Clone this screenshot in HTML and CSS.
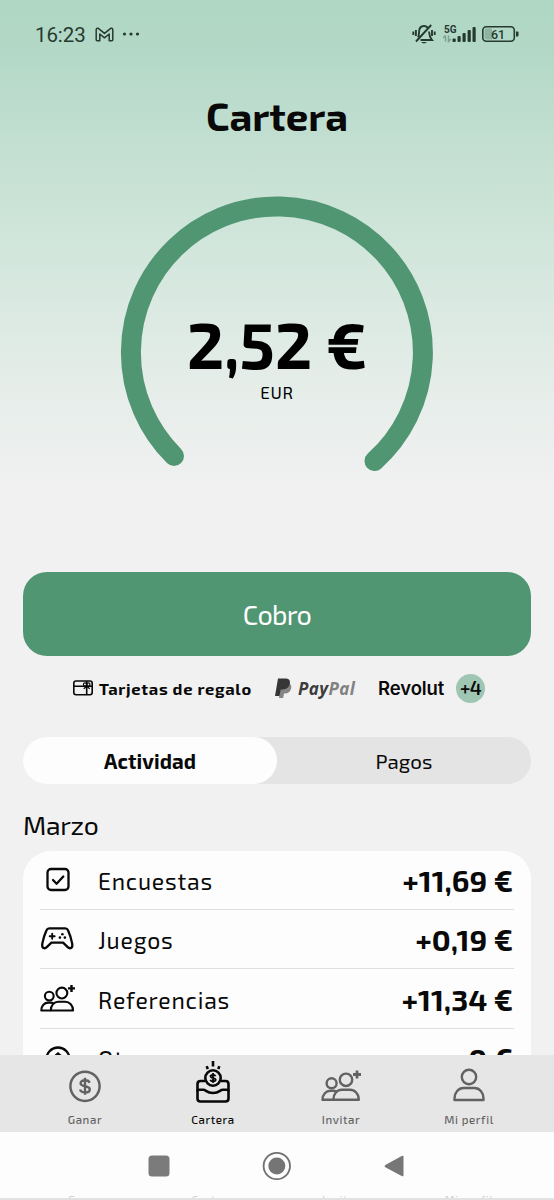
FILE: index.html
```html
<!DOCTYPE html>
<html lang="es">
<head>
<meta charset="utf-8">
<title>Cartera</title>
<link rel="stylesheet" href="styles.css">
</head>
<body>
<svg width="0" height="0" class="defs">
  <symbol id="people" viewBox="0 0 40 32">
    <g fill="none" stroke="currentColor" stroke-width="2.400" stroke-linejoin="round">
      <circle cx="10.600" cy="13.800" r="5"/>
      <circle cx="25" cy="10.300" r="6.200"/>
      <path d="M12.300 30.300c0-6 4-10 8.500-10h8c5 0 9 4 9 10z"/>
      <path d="M15.500 22.100c-1.200-.6-2-.8-3.500-.8H9.500c-4.500 0-8 3.500-8 9h11"/>
    </g>
    <path d="M36 1v8M32 5h8" stroke="currentColor" stroke-width="2.800" fill="none"/>
  </symbol>
</svg>
<div class="phone">
  <main class="content">
    <div class="status">
      <span class="clock">16:23</span>
      <svg class="gmail" width="19" height="15" viewBox="0 0 19 15" fill="none" stroke="currentColor" stroke-width="1.500" stroke-linejoin="round"><path d="M1.200 2.600Q1.500.8 3.300 1.300L9.500 6.400 15.700 1.300Q17.500.8 17.800 2.600V12.800q0 1-1 1h-2.600V7L9.500 10.800 4.800 7v6.800H2.200q-1 0-1-1z"/></svg>
      <svg class="dots" width="18" height="4" viewBox="0 0 18 4" fill="currentColor"><circle cx="2.500" cy="2" r="1.600"/><circle cx="9" cy="2" r="1.600"/><circle cx="15.500" cy="2" r="1.600"/></svg>
      <svg class="bell" width="24" height="20" viewBox="0 0 24 20" fill="none" stroke="currentColor" stroke-width="1.900"><path d="M6 13.500c1-1.500 1-3 1-5 0-4 2-6.500 5-6.500 1.500 0 2.700.6 3.500 1.500M17 7.500c.2 4 .5 5.500 3 8.500H8.500M19.200 1 4 17.500M1.300 7.500v3.500M3.900 6v6M20 6v6M22.700 7.500v3.500"/><path d="M9 18h6q-3 2.800-6 0z" fill="currentColor" stroke="none"/></svg>
      <svg class="signal" width="33" height="20" viewBox="0 -2 33 20"><text x="1" y="7.500" class="net">5G</text><path class="faint" d="M2.500 10.500v6M0 13l2.500-2.500M5.500 10.500v6L8 14"/><g fill="currentColor"><rect x="9.500" y="13.500" width="3.300" height="3.500" rx="1"/><rect x="14.500" y="11" width="3.200" height="6" rx="1"/><rect x="19.500" y="8" width="3.200" height="9" rx="1"/><rect x="24.600" y="5" width="3.200" height="12" rx="1"/><rect x="29.500" y="2" width="3.200" height="15" rx="1"/></g></svg>
      <svg class="battery" width="37" height="16" viewBox="0 0 37 16"><path d="M4.500 2.500H10v11H4.500q-2 0-2-2v-7q0-2 2-2z" fill="#8fb3a1"/><rect x=".8" y=".8" width="31.500" height="14.400" rx="3.500" fill="none" stroke="currentColor" stroke-width="1.600"/><path d="M34 5.500h1.500q1 0 1 1v3q0 1-1 1H34z" fill="currentColor"/><text x="16" y="12.500" text-anchor="middle" class="level">61</text></svg>
    </div>
    <h1 class="title">Cartera</h1>
    <div class="gauge">
      <svg class="arc" width="314" height="314" viewBox="120 196 314 314"><path d="M174 456A146 146 0 1 1 374.500 461" fill="none" stroke="#519672" stroke-width="20" stroke-linecap="round"/></svg>
      <div class="balance"><div class="amount">2,52 €</div><div class="currency">EUR</div></div>
    </div>
    <button class="cashout">Cobro</button>
    <div class="methods">
      <svg class="gift" width="20" height="16" viewBox="0 0 20 16" fill="none" stroke="currentColor" stroke-width="1.600"><rect x=".8" y="1" width="18.400" height="13.800" rx="2.200"/><path d="M1 6.200h18M13.700 1v14"/><path d="m13.700 6.200-3 2.600M13.700 6.200l3 2.600" stroke-width="1.200"/><circle cx="12" cy="4.500" r="1.600" stroke-width="1.200"/><circle cx="15.400" cy="4.500" r="1.600" stroke-width="1.200"/></svg>
      <span class="cards">Tarjetas de regalo</span>
      <svg class="pp" width="17" height="21" viewBox="0 0 17 21"><path d="M6 5h7.500c2.500 1 3.300 3 2.600 5.500-.8 3.500-3 5-6.300 5H9L8.200 20H4z" fill="#858585"/><path d="M3 .5h7.500c3.700 0 5 2.200 4.300 5.300-.8 3.800-3.300 5.700-7 5.700H5.700L4.500 18H0z" fill="#363636"/></svg>
      <span class="paypal">Pay<span class="pal">Pal</span></span>
      <span class="revolut">Revolut</span>
      <span class="more">+4</span>
    </div>
    <div class="tabs"><div class="tab active">Actividad</div><div class="tab">Pagos</div></div>
    <h2 class="month">Marzo</h2>
    <section class="card">
      <div class="row">
        <svg width="36" height="36" viewBox="0 0 36 36" fill="none" stroke="currentColor" stroke-width="2.300" stroke-linecap="round" stroke-linejoin="round"><rect x="7.500" y="7" width="21" height="21" rx="3.500"/><path d="m13 18 3.600 3.700 6.700-7.200"/></svg>
        <span class="name">Encuestas</span><span class="value">+11,69 €</span>
      </div>
      <div class="row">
        <svg width="36" height="36" viewBox="0 0 36 36" fill="none" stroke="currentColor" stroke-width="2.300" stroke-linecap="round" stroke-linejoin="round"><path d="M9.300 7.300H25.200q2 0 2.800 1.900 2.900 6.300 4.200 13.400c.8 4.800-2.300 5.600-4.500 3.500l-4.600-4.400H11.400l-4.600 4.400C4.600 28.200 1.500 27.400 2.300 22.600Q3.600 15.500 6.500 9.200 7.300 7.300 9.300 7.300z"/><path d="M12.200 12.700v5M9.700 15.200h5" stroke-width="1.900"/><g fill="currentColor" stroke="none"><circle cx="22.400" cy="13.200" r="1.300"/><circle cx="19.900" cy="16.600" r="1.300"/><circle cx="24.900" cy="16.600" r="1.300"/></g></svg>
        <span class="name">Juegos</span><span class="value">+0,19 €</span>
      </div>
      <div class="row">
        <svg width="36" height="36" viewBox="0 0 36 36"><use href="#people" x="0" y="3" width="35" height="28"/></svg>
        <span class="name">Referencias</span><span class="value">+11,34 €</span>
      </div>
      <div class="row">
        <svg width="36" height="36" viewBox="0 0 36 36" fill="none" stroke="currentColor" stroke-width="2.300" stroke-linecap="round"><circle cx="18" cy="19" r="11.500"/><path d="M18 13.500V25M14.500 16.500l3.500-3 3.500 3"/></svg>
        <span class="name">Otros</span><span class="value">0 €</span>
      </div>
    </section>
  </main>
  <nav class="menu">
    <div class="item">
      <svg width="40" height="48" viewBox="0 0 40 48" fill="none" stroke="currentColor" stroke-width="2.500"><circle cx="20" cy="26.300" r="14.600"/><path d="M24.600 22.800c-.5-1.700-2-2.600-4.500-2.600-2.700 0-4.500 1-4.500 3 0 4.300 9.200 1.800 9.200 6.200 0 2-1.900 3-4.700 3-2.700 0-4.500-1-5-2.900M20 17.800v17" stroke-width="2.400"/></svg>
      <span>Ganar</span>
    </div>
    <div class="item on">
      <svg width="40" height="48" viewBox="0 0 40 48" fill="none" stroke="currentColor" stroke-width="2.600" stroke-linejoin="round"><path d="M12 21H7.500q-3 0-3 3V38.500q0 3 3 3h25q3 0 3-3V24q0-3-3-3H28"/><path d="M4.500 31.500q0-1.700 1.500-1.700h4.500c2.500 0 3 3.200 9.500 3.200s7-3.200 9.500-3.200H34q1.500 0 1.500 1.700"/><circle cx="20" cy="18" r="7.700"/><path d="M22.500 16.200c-.5-1.900-5-1.700-5 .1 0 2.300 5.200 1.200 5.200 3.500 0 2-4.800 2.100-5.400 0M20 13v10" stroke-width="1.800"/><path d="M20 1v5.500M13.700 6.200l1 3M26.300 6.200l-1 3"/></svg>
      <span>Cartera</span>
    </div>
    <div class="item">
      <svg width="40" height="48" viewBox="0 0 40 48"><use href="#people" x="0" y="9.500" width="40" height="32"/></svg>
      <span>Invitar</span>
    </div>
    <div class="item">
      <svg width="40" height="48" viewBox="0 0 40 48" fill="none" stroke="currentColor" stroke-width="2.400" stroke-linejoin="round"><circle cx="20" cy="17" r="7.200"/><path d="M5.500 40v-1.500c0-6 4-10.500 9-10.500h11c5 0 9 4.500 9 10.500V40z"/></svg>
      <span>Mi perfil</span>
    </div>
  </nav>
  <div class="system">
    <svg width="554" height="63" viewBox="0 0 554 63"><rect x="148.500" y="23.500" width="21" height="21" rx="3.500" fill="#7b7b7b"/><circle cx="276.800" cy="34" r="13.200" fill="none" stroke="#707070" stroke-width="1.800"/><circle cx="276.800" cy="34" r="8.500" fill="#757575"/><path d="M403.500 25v18q0 2-1.800 1L385.300 35.200q-1.600-1.200 0-2.300L401.700 24q1.800-1 1.800 1z" fill="#777"/></svg>
    <div class="edge" aria-hidden="true"><span>Ganar</span><span>Cartera</span><span>Invitar</span><span>Mi perfil</span></div>
  </div>
</div>
</body>
</html>
```
FILE: styles.css
```css
* { box-sizing: border-box; }
body { margin: 0; font-family: "Exo 2", Roboto, "Noto Sans", sans-serif; color: #090909; }
.defs { display: block; }
.phone { width: 554px; height: 1200px; display: flex; flex-direction: column; overflow: hidden; background: #f1f1f1; }
.content { height: 1055px; flex: none; overflow: hidden; background: linear-gradient(#afd6c3 0, #b3d8c7 50px, #c2dfd1 140px, #d2e6dc 250px, #e2ece7 360px, #f1f1f1 490px); }
svg { flex: none; display: block; }

.status { height: 68px; padding: 0 35px; display: flex; align-items: center; color: #263a31; }
.clock { font: 400 20.500px Roboto, sans-serif; letter-spacing: -.1px; margin-top: 1px; width: 60px; }
.dots { margin-left: 8px; }
.bell { margin-left: auto; }
.signal { margin: -2px 0 0 7px; }
.battery { margin-left: 6px; }
.net { font: 700 10px Roboto, sans-serif; fill: currentColor; }
.level { font: 500 12.500px Roboto, sans-serif; fill: currentColor; }
.faint { fill: none; stroke: #809f8f; stroke-width: 1.500; }

.title { margin: 20px 0 0; height: 54px; line-height: 54px; text-align: center; font-size: 40px; font-weight: 700; }
.gauge { display: grid; justify-items: center; margin-top: 54px; height: 314px; }
.arc, .balance { grid-area: 1 / 1; }
.balance { padding-top: 111px; text-align: center; color: #000; }
.amount { font-size: 64px; line-height: 73px; font-weight: 700; }
.currency { font-size: 17px; line-height: 24px; letter-spacing: .7px; }

.cashout { display: block; width: 508px; height: 84px; margin: 62px auto 0; border: 0; border-radius: 24px; background: #519672; color: #fff; font: inherit; font-size: 27px; letter-spacing: -.7px; padding: 0; }
.methods { display: flex; align-items: center; height: 30px; margin-top: 17px; padding-left: 73px; }
.cards { margin-left: 6px; width: 176px; font-size: 16.500px; font-weight: 700; letter-spacing: .7px; white-space: nowrap; }
.paypal { margin-left: 6px; width: 80px; font: italic 700 17px "Open Sans", sans-serif; color: #3c3c3c; letter-spacing: .4px; }
.pal { color: #818181; }
.revolut { width: 78px; font: 600 18.500px Inter, sans-serif; letter-spacing: -.1px; }
.more { width: 29px; height: 29px; border-radius: 50%; background: #9fc6b3; text-align: center; font-size: 19px; line-height: 28px; font-weight: 600; letter-spacing: -.5px; }

.tabs { display: flex; margin: 34px 23px 0; height: 47px; border-radius: 24px; background: #e4e4e4; }
.tab { flex: 1; border-radius: 24px; text-align: center; font-size: 20.500px; line-height: 49px; letter-spacing: .1px; }
.active { background: #fdfdfd; font-weight: 700; letter-spacing: .1px; }
.month { margin: 24px 0 0 23px; height: 34px; line-height: 34px; font-size: 26.500px; font-weight: 400; letter-spacing: -.3px; }

.card { margin: 9px 23px 0; padding: 0 17px; border-radius: 28px 28px 0 0; background: #fdfdfd; }
.row { height: 59.500px; display: flex; align-items: center; border-bottom: 1.500px solid #dfdfdf; padding: 1px 1px 0 0; }
.row:first-child { height: 58.500px; }
.row svg { margin-top: 0; }
.name { margin: 2px 0 0 22px; flex: 1; font-size: 23px; letter-spacing: .8px; }
.value { font-size: 30px; font-weight: 700; }

.menu { height: 77px; flex: none; display: grid; grid-template-columns: repeat(4, 128px); justify-content: center; background: #e6e6e6; padding: 5px 0 0; }
.item { display: flex; flex-direction: column; align-items: center; color: #626262; font-size: 11.500px; font-weight: 500; letter-spacing: .6px; }
.item span { margin-top: 4px; line-height: 16px; }
.on { color: #080808; }
.system { height: 68px; flex: none; background: #fdfdfd; border-bottom: 2px solid #e2e2e2; }
.edge { height: 3px; overflow: hidden; display: grid; grid-template-columns: repeat(4, 128px); justify-content: center; text-align: center; font-size: 11.500px; line-height: 10px; letter-spacing: .6px; color: #d0d0d0; }
```
